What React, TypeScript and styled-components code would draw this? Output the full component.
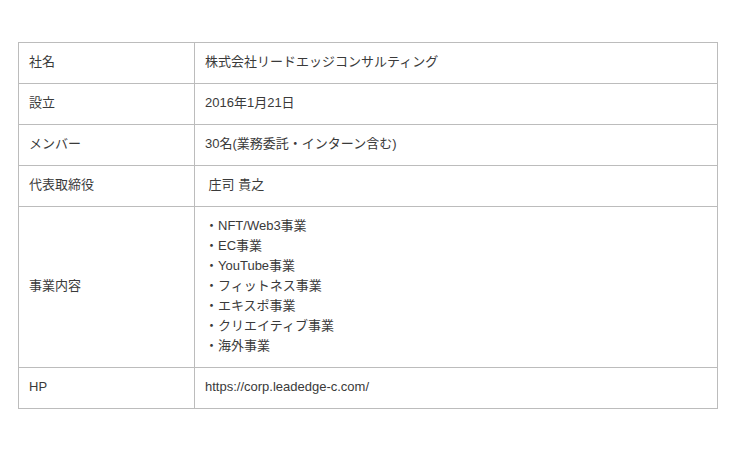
import styled, { createGlobalStyle } from "styled-components";

const GlobalStyle = createGlobalStyle`
  body {
    margin: 0;
    background: #fff;
    font-family: "Liberation Sans", "Noto Sans CJK JP", sans-serif;
    color: #3a3a3a;
  }
`;

const Page = styled.div`
  padding: 42px 0 0 18px;
`;

const Table = styled.table`
  width: 700px;
  border-collapse: collapse;
  font-size: 13px;
  line-height: 20px;
`;

const Cell = styled.td<{ $head?: boolean }>`
  border: 1px solid #bcbcbc;
  padding: 9px 10px 11px;
  vertical-align: middle;
  width: ${(p) => (p.$head ? "155px" : "auto")};
`;

const rows: [string, string[]][] = [
  ["社名", ["株式会社リードエッジコンサルティング"]],
  ["設立", ["2016年1月21日"]],
  ["メンバー", ["30名(業務委託・インターン含む)"]],
  ["代表取締役", ["\u00a0庄司 貴之"]],
  [
    "事業内容",
    [
      "・NFT/Web3事業",
      "・EC事業",
      "・YouTube事業",
      "・フィットネス事業",
      "・エキスポ事業",
      "・クリエイティブ事業",
      "・海外事業",
    ],
  ],
  ["HP", ["https://corp.leadedge-c.com/"]],
];

export default function App() {
  return (
    <Page>
      <GlobalStyle />
      <Table>
        <tbody>
          {rows.map(([label, lines]) => (
            <tr key={label}>
              <Cell $head>{label}</Cell>
              <Cell>
                {lines.map((l) => (
                  <div key={l}>{l}</div>
                ))}
              </Cell>
            </tr>
          ))}
        </tbody>
      </Table>
    </Page>
  );
}
